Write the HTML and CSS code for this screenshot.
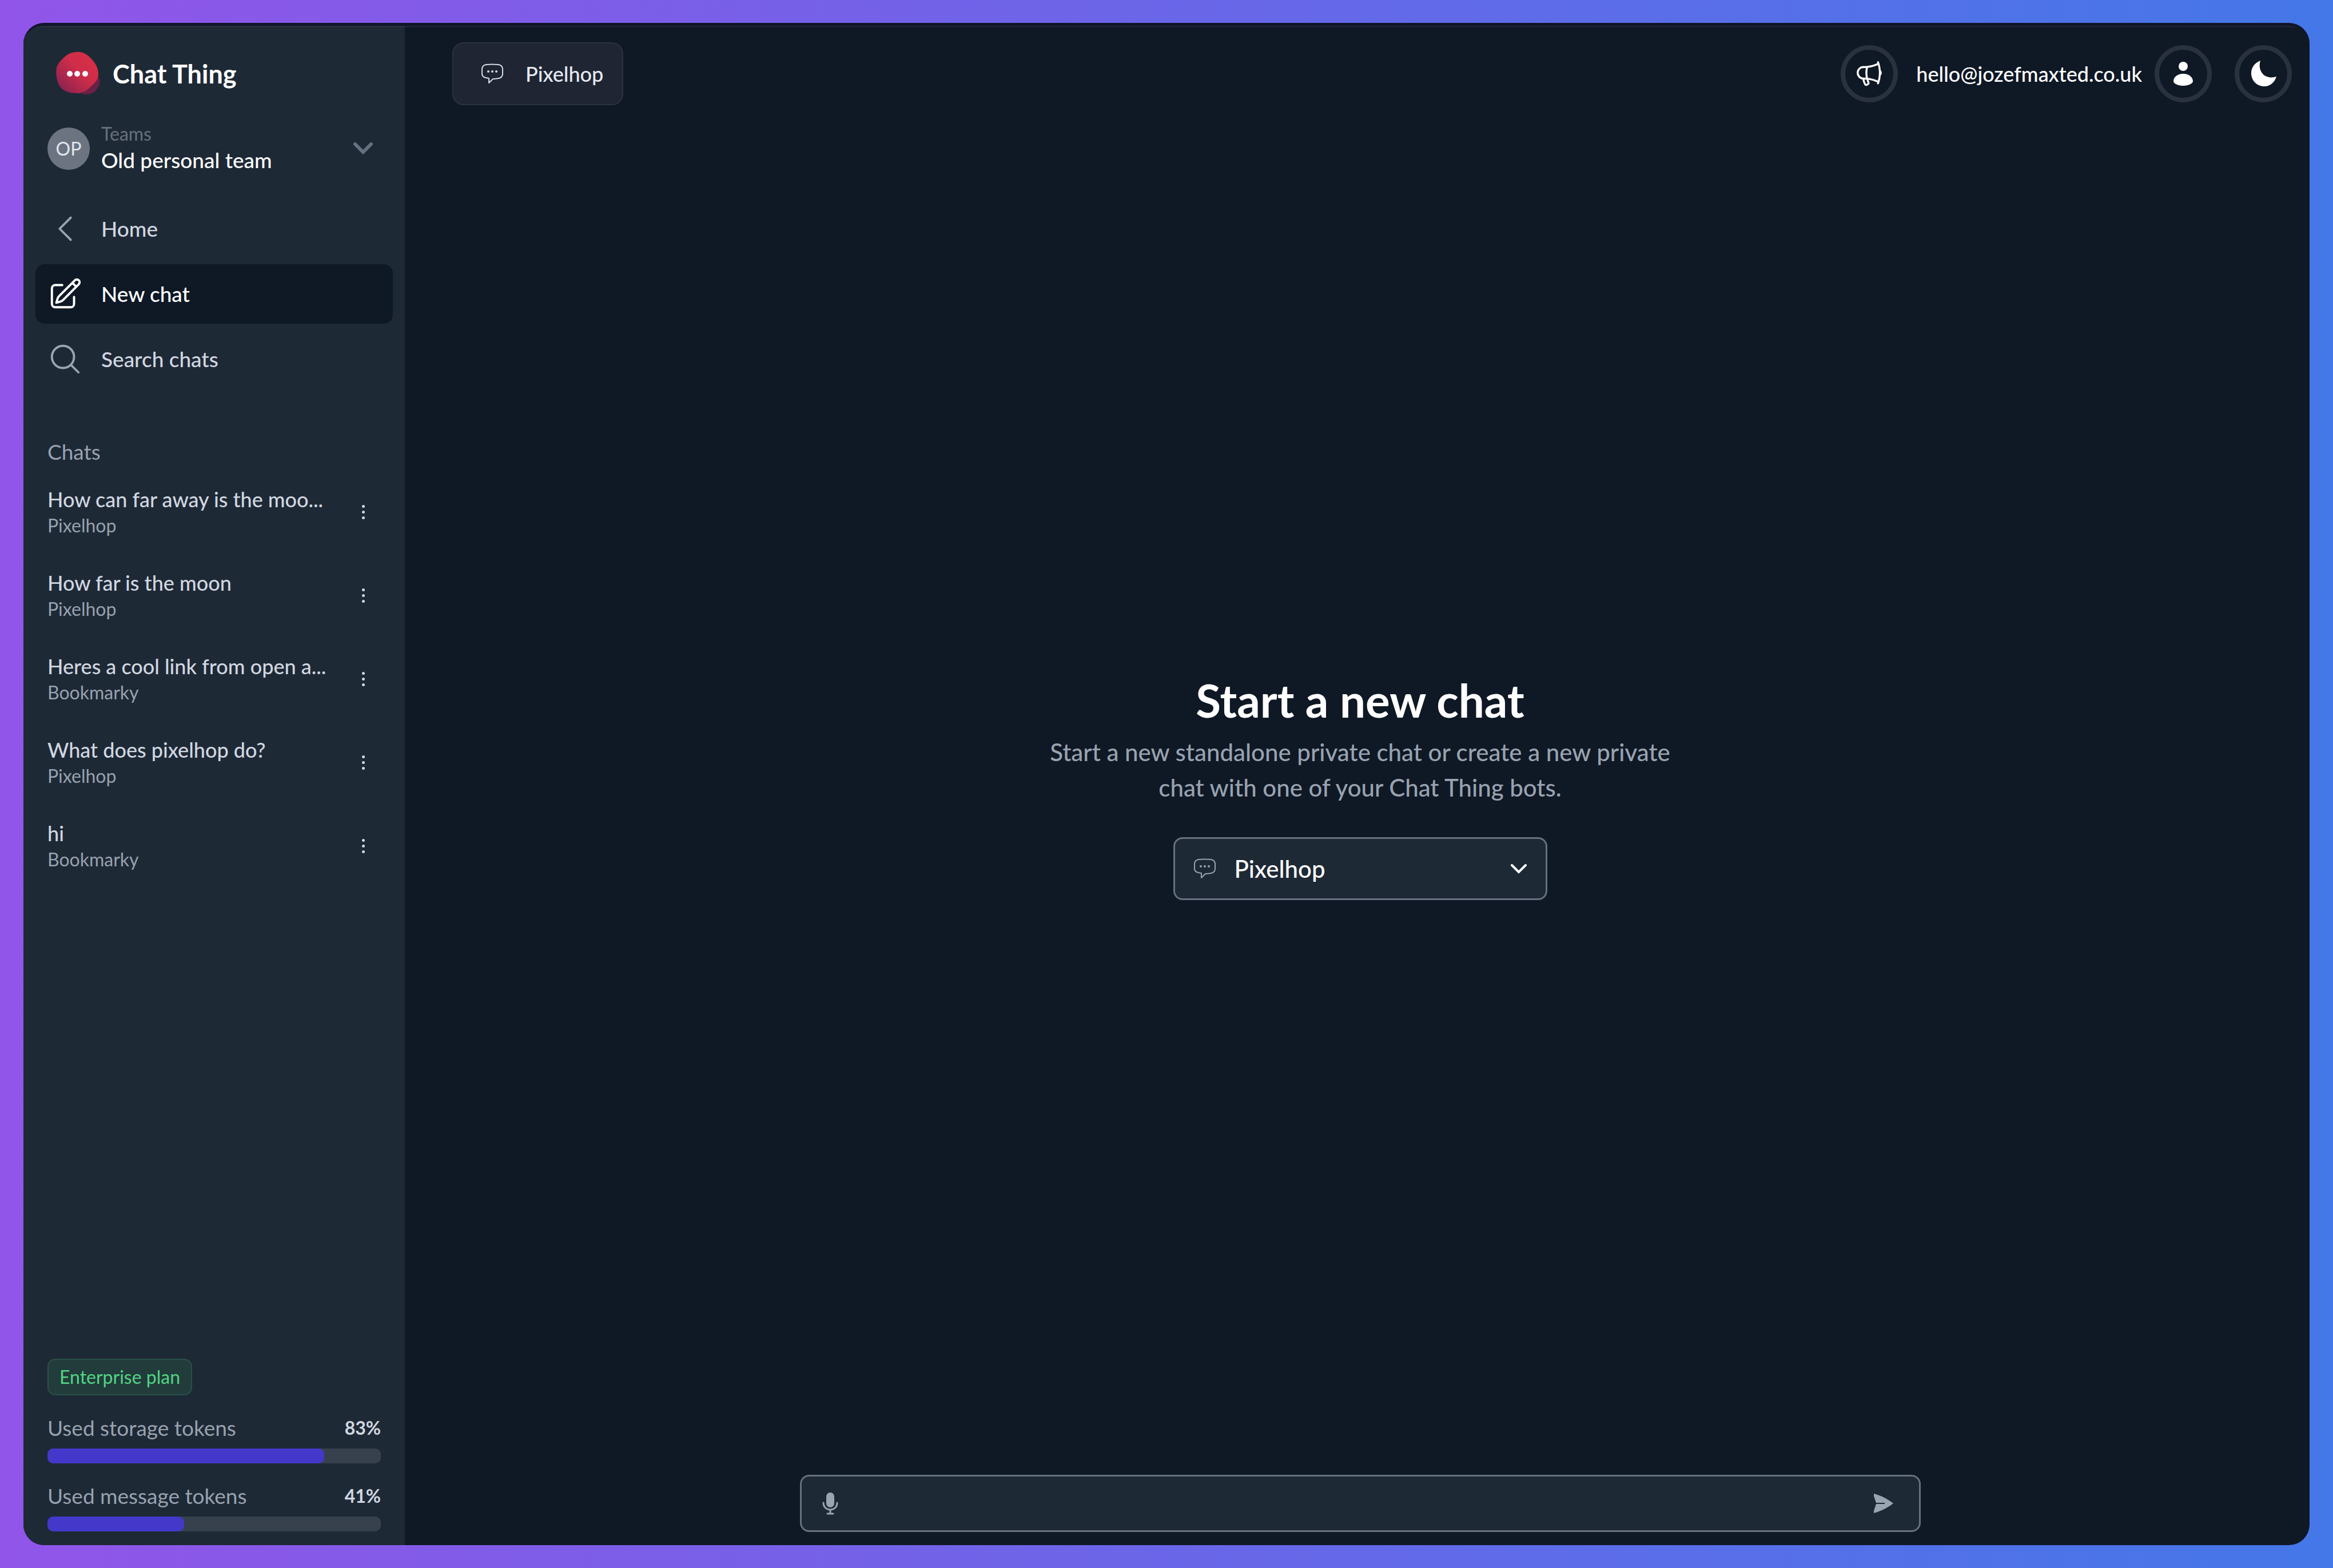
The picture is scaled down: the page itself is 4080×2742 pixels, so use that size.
FILE: index.html
```html
<!DOCTYPE html>
<html lang="en">
<head>
  <meta charset="UTF-8">
  <meta name="viewport" content="width=device-width, initial-scale=1.0">
  <title>Chat Thing</title>
  <link rel="stylesheet" href="styles.css">
</head>
<body>
  <div class="window">
    <aside class="sidebar">
      <a href="#" class="brand">
        <svg class="logo" viewBox="0 0 80 80">
          <defs>
            <linearGradient id="blob" x1="0" y1="1" x2="1" y2="0">
              <stop offset="0" stop-color="#7d2052"/>
              <stop offset="0.55" stop-color="#cf2d49"/>
              <stop offset="1" stop-color="#dc2f46"/>
            </linearGradient>
          </defs>
          <path d="M74 44Q82 54 73 66Q66 79 46 75Z" fill="#6a2145"/>
          <path d="M37 2C46 1 54 5 61 12C70 21 75 30 75 40C75 50 69 56 61 63C53 71 45 75 37 74C26 74 13 71 7 61C2 53 0 38 2 29C5 20 12 14 19 8C24 4 30 2 37 2Z" fill="url(#blob)"/>
          <g fill="#fff"><circle cx="25" cy="40" r="5"/><circle cx="38" cy="40" r="5"/><circle cx="52" cy="40" r="5"/></g>
        </svg>
        <span>Chat Thing</span>
      </a>

      <button class="team">
        <span class="avatar">OP</span>
        <span class="team-text">
          <span class="team-label">Teams</span>
          <span class="team-name">Old personal team</span>
        </span>
        <svg class="team-arrow" viewBox="0 0 36 24"><path d="M4 4l14 14L32 4"/></svg>
      </button>

      <nav class="nav">
        <a href="#" class="nav-item">
          <svg viewBox="0 0 24 24"><path d="M15.75 19.5L8.25 12l7.5-7.5"/></svg>
          <span>Home</span>
        </a>
        <a href="#" class="nav-item active">
          <svg viewBox="0 0 24 24"><path d="M16.862 4.487l1.687-1.688a1.875 1.875 0 112.652 2.652L10.582 16.07a4.5 4.5 0 01-1.897 1.13L6 18l.8-2.685a4.5 4.5 0 011.13-1.897l8.932-8.931zm0 0L19.5 7.125M18 14v4.75A2.25 2.25 0 0115.75 21H5.25A2.25 2.25 0 013 18.75V8.25A2.25 2.25 0 015.25 6H10"/></svg>
          <span>New chat</span>
        </a>
        <a href="#" class="nav-item">
          <svg viewBox="0 0 24 24"><path d="M21 21l-5.197-5.197m0 0A7.5 7.5 0 105.196 5.196a7.5 7.5 0 0010.607 10.607z"/></svg>
          <span>Search chats</span>
        </a>
      </nav>

      <h2 class="section-title">Chats</h2>
      <ul class="chats">
        <li>
          <a href="#"><span class="chat-title">How can far away is the moo...</span><span class="chat-bot">Pixelhop</span></a>
          <button class="more" aria-label="Chat options"><i></i><i></i><i></i></button>
        </li>
        <li>
          <a href="#"><span class="chat-title">How far is the moon</span><span class="chat-bot">Pixelhop</span></a>
          <button class="more" aria-label="Chat options"><i></i><i></i><i></i></button>
        </li>
        <li>
          <a href="#"><span class="chat-title">Heres a cool link from open a...</span><span class="chat-bot">Bookmarky</span></a>
          <button class="more" aria-label="Chat options"><i></i><i></i><i></i></button>
        </li>
        <li>
          <a href="#"><span class="chat-title">What does pixelhop do?</span><span class="chat-bot">Pixelhop</span></a>
          <button class="more" aria-label="Chat options"><i></i><i></i><i></i></button>
        </li>
        <li>
          <a href="#"><span class="chat-title">hi</span><span class="chat-bot">Bookmarky</span></a>
          <button class="more" aria-label="Chat options"><i></i><i></i><i></i></button>
        </li>
      </ul>

      <div class="usage">
        <div class="plan">Enterprise plan</div>
        <div class="usage-row"><span>Used storage tokens</span><b>83%</b></div>
        <div class="bar"><div class="bar-fill" style="width: 83%"></div></div>
        <div class="usage-row"><span>Used message tokens</span><b>41%</b></div>
        <div class="bar"><div class="bar-fill" style="width: 41%"></div></div>
      </div>
    </aside>

    <main class="main">
      <header class="topbar">
        <button class="bot-btn">
          <svg class="chat-icon" viewBox="0 0 40 36"><path d="M9 2Q20 1 31 2Q37 3 38 9V19Q37 25 31 26Q26 27 21 27L14 34V26L9 25Q3 24 2 19V9Q3 3 9 2Z"/><g class="dots"><circle cx="13" cy="14" r="2"/><circle cx="20" cy="14" r="2"/><circle cx="27" cy="14" r="2"/></g></svg>
          <span>Pixelhop</span>
        </button>
        <div class="account">
          <button class="round" aria-label="News">
            <svg class="line-icon" viewBox="0 0 24 24"><path d="M10.34 15.84c-.688-.06-1.386-.09-2.09-.09H7.5a4.5 4.5 0 110-9h.75c.704 0 1.402-.03 2.09-.09m0 9.18c.253.962.584 1.892.985 2.783.247.55.06 1.21-.463 1.511l-.657.38c-.551.318-1.26.117-1.527-.461a20.845 20.845 0 01-1.44-4.282m3.102.069a18.03 18.03 0 01-.59-4.59c0-1.586.205-3.124.59-4.59m0 9.18a23.848 23.848 0 018.835 2.535M10.34 6.66a23.847 23.847 0 008.835-2.535m0 0A23.74 23.74 0 0018.795 3m.38 1.125a23.91 23.91 0 011.014 5.395m-1.014 8.855c-.118.38-.245.754-.38 1.125m.38-1.125a23.91 23.91 0 001.014-5.395m0-3.46c.495.413.811 1.035.811 1.73 0 .695-.316 1.317-.811 1.73m0-3.46a24.347 24.347 0 010 3.46"/></svg>
          </button>
          <a href="#" class="email">hello@jozefmaxted.co.uk</a>
          <button class="round" aria-label="Account">
            <svg class="solid-icon" viewBox="0 0 48 48"><circle cx="24" cy="11" r="8"/><path d="M7 37C7 30 14 24 24 24S41 30 41 37C41 41 33 45 24 45S7 41 7 37Z"/></svg>
          </button>
          <button class="round moon" aria-label="Dark mode">
            <svg class="solid-icon" viewBox="0 0 48 48"><path d="M19 1C15 14 21 24 28 28C34 31 40 31 47 29C44 39 36 46 26 46C13 46 3 36 3 23C3 13 9 5 19 1Z"/></svg>
          </button>
        </div>
      </header>

      <section class="intro">
        <h1>Start a new chat</h1>
        <p>Start a new standalone private chat or create a new private chat with one of your Chat Thing bots.</p>
        <button class="picker">
          <svg class="chat-icon" viewBox="0 0 40 36"><path d="M9 2Q20 1 31 2Q37 3 38 9V19Q37 25 31 26Q26 27 21 27L14 34V26L9 25Q3 24 2 19V9Q3 3 9 2Z"/><g class="dots"><circle cx="13" cy="14" r="2"/><circle cx="20" cy="14" r="2"/><circle cx="27" cy="14" r="2"/></g></svg>
          <span>Pixelhop</span>
          <svg class="picker-arrow" viewBox="0 0 30 20"><path d="M3 4l12 12L27 4"/></svg>
        </button>
      </section>

      <form class="composer">
        <button type="button" class="icon-btn" aria-label="Record">
          <svg viewBox="0 0 28 40"><rect x="7" y="1" width="14" height="26" rx="7" fill="currentColor"/><path d="M2 19c0 16 24 16 24 0M14 31v6M9 38h10" fill="none" stroke="currentColor" stroke-width="3" stroke-linecap="round"/></svg>
        </button>
        <input type="text" aria-label="Message">
        <button type="submit" class="icon-btn send" aria-label="Send">
          <svg viewBox="0 0 36 36"><path d="M1 1Q20 6 35 18Q20 30 1 35V31L5 19H20V17H5L1 5Z" fill="currentColor"/></svg>
        </button>
      </form>
    </main>
  </div>
</body>
</html>
```
FILE: styles.css
```css
* {
  box-sizing: border-box;
}
body {
  margin: 0;
  padding: 40px 41px;
  height: 100vh;
  background: linear-gradient(90deg, #9155e9, #4477e8);
  color: #fff;
  font-family: Lato, "Liberation Sans", sans-serif;
  font-size: 37px;
  line-height: 48px;
}
a {
  color: inherit;
  text-decoration: none;
}
button {
  margin: 0;
  padding: 0;
  border: 0;
  background: none;
  color: inherit;
  font: inherit;
  text-align: left;
  cursor: pointer;
}
svg {
  display: block;
  flex: none;
}
.window {
  display: flex;
  height: 100%;
  border-top: 5px solid #11152a;
  border-radius: 36px;
  background: #0f1825;
  overflow: hidden;
}

/* Sidebar */
.sidebar {
  display: flex;
  flex-direction: column;
  flex: none;
  width: 667px;
  padding: 0 21px 24px;
  border-top: 3px solid #24303c;
  background: #1e2936;
}
.brand {
  display: flex;
  align-items: center;
  gap: 20px;
  height: 162px;
  padding-left: 35px;
  font-size: 45px;
  font-weight: bold;
}
.logo {
  width: 80px;
  height: 80px;
}
.team {
  display: flex;
  align-items: center;
  gap: 20px;
  height: 100px;
  padding: 0 34px 0 21px;
}
.avatar {
  width: 74px;
  height: 74px;
  border-radius: 50%;
  background: #6c7482;
  color: #e2e6ec;
  font-size: 32px;
  line-height: 74px;
  text-align: center;
}
.team-text {
  flex: 1;
  padding-bottom: 4px;
}
.team-label,
.team-name,
.chat-title,
.chat-bot {
  display: block;
}
.team-label {
  color: #66707e;
  font-size: 32px;
  line-height: 44px;
}
.team-name {
  font-weight: 500;
}
.team-arrow {
  width: 36px;
  height: 24px;
  fill: none;
  stroke: #66707e;
  stroke-width: 6;
  stroke-linecap: round;
}
.nav {
  display: flex;
  flex-direction: column;
  gap: 10px;
  margin-top: 38px;
}
.nav-item {
  display: flex;
  align-items: center;
  gap: 32px;
  height: 104px;
  padding-left: 21px;
  border-radius: 16px;
  color: #d1d7e0;
  font-weight: 500;
}
.nav-item svg {
  width: 62px;
  height: 62px;
  fill: none;
  stroke: #9aa5b2;
  stroke-width: 1.5;
  stroke-linecap: round;
  stroke-linejoin: round;
}
.nav-item.active {
  background: #0f1825;
  color: #fff;
}
.nav-item.active svg {
  stroke: #fff;
}
.section-title {
  margin: 86px 0 8px 21px;
  color: #98a2af;
  font-size: 37px;
  font-weight: normal;
}
.chats {
  margin: 0;
  padding: 0;
  list-style: none;
}
.chats li {
  display: flex;
  align-items: center;
  height: 146px;
  padding: 0 42px 0 21px;
}
.chats a {
  flex: 1;
  color: #d1d7e0;
}
.chat-title {
  font-size: 36px;
  font-weight: 500;
}
.chat-bot {
  color: #98a2af;
  font-size: 32px;
  line-height: 44px;
}
.more {
  display: flex;
  flex-direction: column;
  align-items: center;
  gap: 5px;
  width: 20px;
}
.more i {
  width: 5px;
  height: 5px;
  border-radius: 50%;
  background: #d1d7e0;
}
.usage {
  margin-top: auto;
  padding: 0 21px;
}
.plan {
  width: fit-content;
  padding: 0 19px;
  border: 2px solid #285148;
  border-radius: 14px;
  background: #223c3b;
  color: #52d583;
  font-size: 32px;
  line-height: 60px;
}
.usage-row {
  display: flex;
  justify-content: space-between;
  margin-top: 33px;
  color: #98a2af;
}
.usage-row b {
  color: #d1d7e0;
  font-size: 32px;
}
.bar {
  height: 26px;
  margin-top: 12px;
  border-radius: 10px;
  background: #37414d;
}
.bar-fill {
  height: 100%;
  border-radius: 10px;
  background: #4338ca;
}

/* Main area */
.main {
  display: flex;
  flex-direction: column;
  flex: 1;
  padding-bottom: 23px;
  border-top: 3px solid #1c2330;
}
.topbar {
  display: flex;
  align-items: center;
  justify-content: space-between;
  height: 162px;
  padding: 0 31px 0 83px;
}
.bot-btn {
  display: flex;
  align-items: center;
  gap: 38px;
  height: 110px;
  padding: 0 33px 0 48px;
  border: 2px solid #2b323f;
  border-radius: 20px;
  background: #1f2532;
  color: #e5e9f2;
  font-size: 36px;
  font-weight: 500;
}
.chat-icon {
  width: 40px;
  height: 36px;
  fill: none;
  stroke: #d1dce4;
  stroke-width: 2;
  stroke-linejoin: round;
}
.chat-icon .dots {
  fill: #d1dce4;
  stroke: none;
}
.account {
  display: flex;
  align-items: center;
}
.round {
  display: flex;
  align-items: center;
  justify-content: center;
  width: 100px;
  height: 100px;
  border: 8px solid #2a313e;
  border-radius: 50%;
}
.round.moon {
  margin-left: 40px;
}
.email {
  margin: 0 22px 0 32px;
  font-size: 36px;
  font-weight: 500;
}
.line-icon {
  width: 54px;
  height: 54px;
  fill: none;
  stroke: #fff;
  stroke-width: 1.5;
  stroke-linecap: round;
  stroke-linejoin: round;
}
.solid-icon {
  width: 48px;
  height: 48px;
  fill: #fff;
}
.intro {
  display: flex;
  flex-direction: column;
  flex: 1;
  align-items: center;
  justify-content: center;
  padding: 0 0 40px 10px;
  text-align: center;
}
.intro h1 {
  margin: 0;
  font-size: 80px;
  line-height: 96px;
}
.intro p {
  width: 1120px;
  margin: 12px 0 56px;
  color: #98a2af;
  font-size: 42px;
  font-weight: 500;
  line-height: 62px;
}
.picker {
  display: flex;
  align-items: center;
  width: 654px;
  height: 110px;
  padding: 0 32px;
  border: 3px solid #667080;
  border-radius: 16px;
  background: #1e2936;
  font-size: 42px;
  font-weight: 500;
}
.picker span {
  flex: 1;
  margin-left: 32px;
}
.picker .chat-icon {
  stroke: #98a2af;
}
.picker .dots {
  fill: #98a2af;
}
.picker-arrow {
  width: 30px;
  height: 20px;
  fill: none;
  stroke: #fff;
  stroke-width: 4;
  stroke-linecap: round;
}
.composer {
  display: flex;
  align-items: center;
  align-self: center;
  width: 1960px;
  max-width: 90%;
  height: 100px;
  margin-left: 10px;
  padding: 0 44px 0 36px;
  border: 3px solid #667080;
  border-radius: 16px;
  background: #1e2936;
}
.composer input {
  flex: 1;
  height: 90px;
  padding: 0 20px;
  border: 0;
  outline: 0;
  background: none;
  color: #fff;
  font: inherit;
}
.icon-btn {
  color: #9aa5b2;
}
.icon-btn svg {
  width: 28px;
  height: 40px;
}
.icon-btn.send svg {
  width: 36px;
  height: 36px;
}
```
